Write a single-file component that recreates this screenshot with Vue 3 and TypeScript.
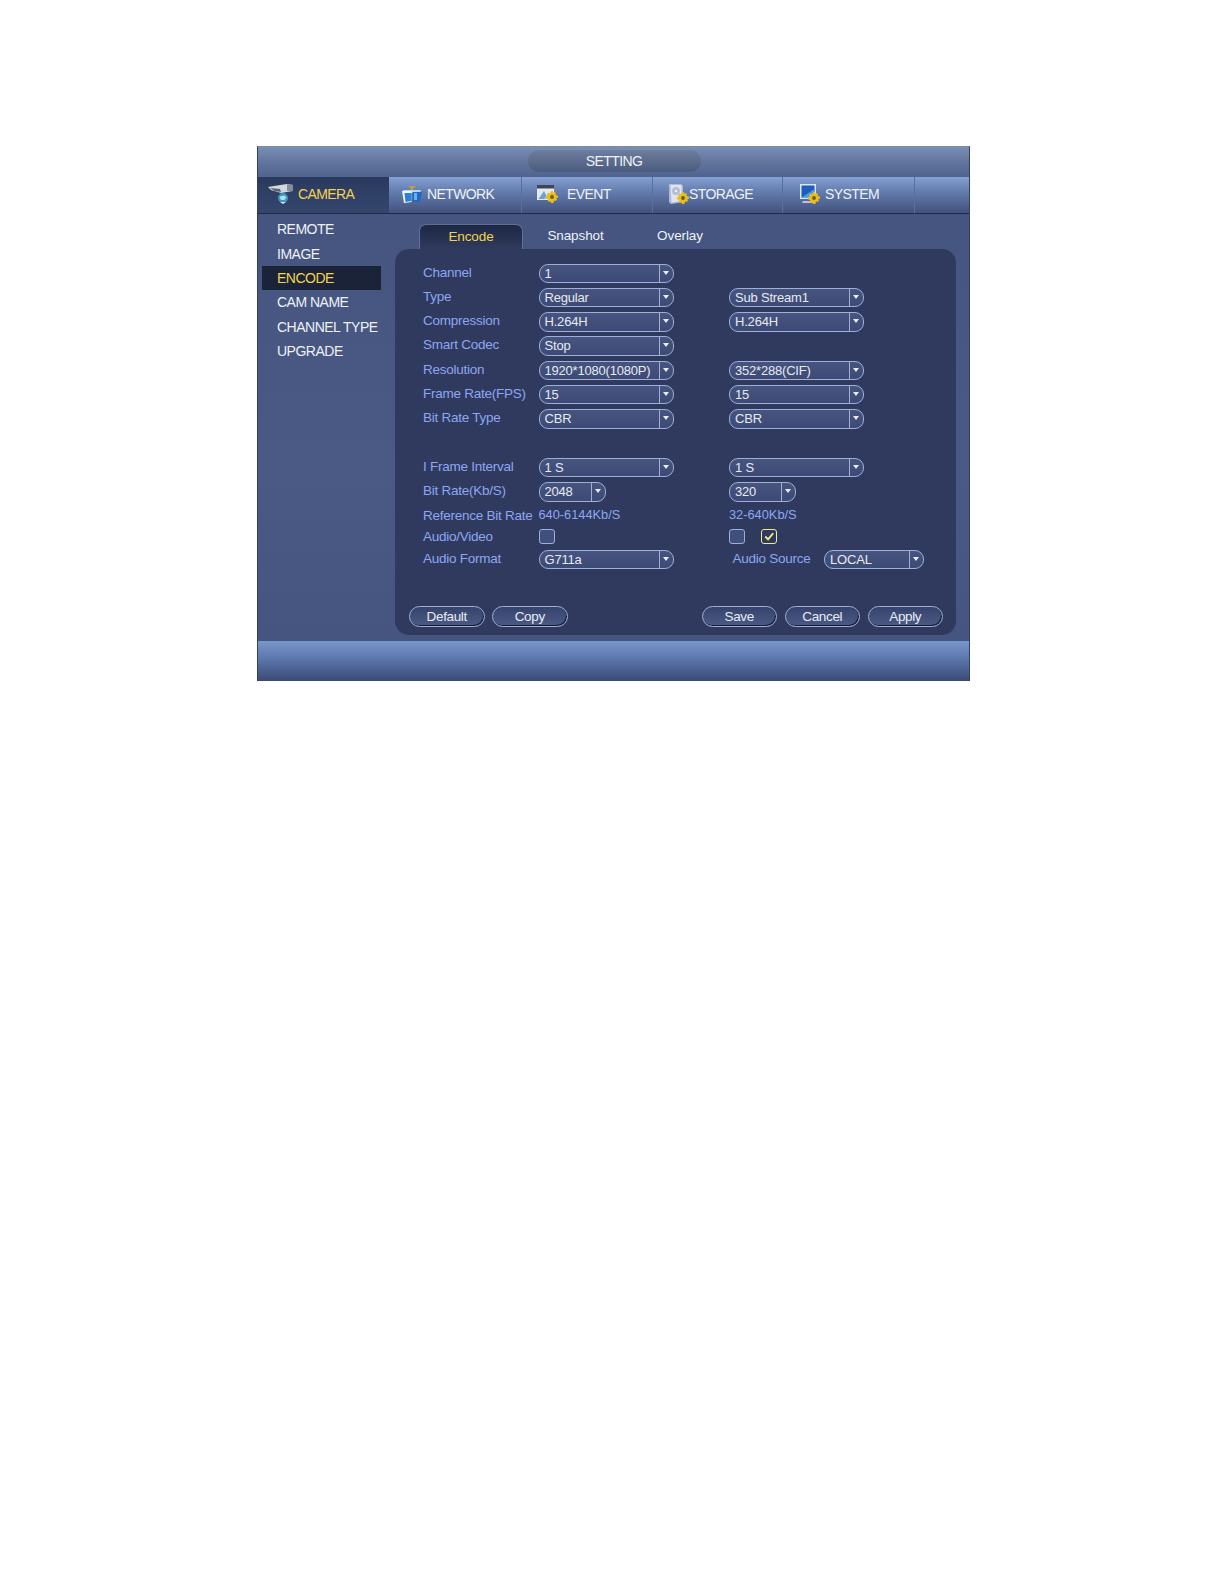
<script setup lang="ts">
interface Sel { text: string; w: number }
interface Row { label: string; a?: Sel; b?: Sel }
const wide = 135
const rows: Row[] = [
  { label: 'Channel', a: { text: '1', w: wide } },
  { label: 'Type', a: { text: 'Regular', w: wide }, b: { text: 'Sub Stream1', w: wide } },
  { label: 'Compression', a: { text: 'H.264H', w: wide }, b: { text: 'H.264H', w: wide } },
  { label: 'Smart Codec', a: { text: 'Stop', w: wide } },
  { label: 'Resolution', a: { text: '1920*1080(1080P)', w: wide }, b: { text: '352*288(CIF)', w: wide } },
  { label: 'Frame Rate(FPS)', a: { text: '15', w: wide }, b: { text: '15', w: wide } },
  { label: 'Bit Rate Type', a: { text: 'CBR', w: wide }, b: { text: 'CBR', w: wide } },
  { label: '' },
  { label: 'I Frame Interval', a: { text: '1 S', w: wide }, b: { text: '1 S', w: wide } },
  { label: 'Bit Rate(Kb/S)', a: { text: '2048', w: 67 }, b: { text: '320', w: 67 } }
]
const menu = ['REMOTE', 'IMAGE', 'ENCODE', 'CAM NAME', 'CHANNEL TYPE', 'UPGRADE']
const tabs = [
  { name: 'CAMERA', w: 131, icon: 'camera' },
  { name: 'NETWORK', w: 133, icon: 'network' },
  { name: 'EVENT', w: 131, icon: 'event' },
  { name: 'STORAGE', w: 130, icon: 'storage' },
  { name: 'SYSTEM', w: 132, icon: 'system' }
]
</script>

<template>
  <div class="page">
    <div class="win">
      <header class="title"><div class="pill">SETTING</div></header>
      <nav class="nav">
        <div v-for="(t, i) in tabs" :key="t.name" class="navitem" :class="{ on: i === 0 }" :style="{ width: t.w + 'px' }">
          <svg v-if="t.icon === 'camera'" class="ico cam" viewBox="0 0 25 20">
            <path d="M0 3 L6 2 L19 0 L25 1 L25 7 L13 9 L3 6 Z" fill="#d3d7de" />
            <path d="M2 4 L12 5 L13 8 L7 7 Z" fill="#596070" />
            <path d="M19 0 L25 1 L25 7 L19 7 Z" fill="#868d9b" />
            <circle cx="15" cy="14" r="5" fill="#3f95bd" />
            <path d="M11.5 13 Q15 10 18.5 13 L16.5 16 L13 16 Z" fill="#a6e2ea" />
            <path d="M12 18 L18 18 L15 20 Z" fill="#dde6ee" />
          </svg>
          <svg v-else-if="t.icon === 'network'" class="ico net" viewBox="0 0 20 17">
            <path d="M6 0 H14 L12 2 H11 V5 H9 V2 H8 Z" fill="#c79a3c" />
            <path d="M1 4 H19 L18 7 H2 Z" fill="#b7d6ee" />
            <path d="M0 5 H9.5 V16 L2 17 Z" fill="#eef5fb" />
            <path d="M2.5 7 H9.5 V15 L3.5 16 Z" fill="#2c80d8" />
            <path d="M10.5 6 H20 L18 16 L10.5 15 Z" fill="#1f68c4" />
            <path d="M12 7 H15 V14 H12 Z" fill="#63b2ee" />
          </svg>
          <svg v-else-if="t.icon === 'event'" class="ico evt" viewBox="0 0 21 18">
            <rect x="0" y="0" width="17" height="15" fill="#e4e9f0" />
            <rect x="0" y="0" width="17" height="3.5" fill="#3f4652" />
            <path d="M1.5 14 L7 6 L11 14 Z" fill="#6f9fd6" />
            <path d="M7 14 L11 8 L15 14 Z" fill="#a9c4e2" />
            <use href="#gear" x="9" y="6" width="12" height="12" />
          </svg>
          <svg v-else-if="t.icon === 'storage'" class="ico sto" viewBox="0 0 20 20">
            <path d="M0 0 H12 L14 2 V18 L2 20 L0 18 Z" fill="#aebbd6" />
            <path d="M1.5 1 H12.5 V17 L2.5 18.5 Z" fill="#dfe4ef" />
            <circle cx="7" cy="7" r="4" fill="#b4bed2" />
            <circle cx="7" cy="7" r="1.2" fill="#eef1f6" />
            <use href="#gear" x="8" y="8" width="12" height="12" />
          </svg>
          <svg v-else-if="t.icon === 'system'" class="ico sys" viewBox="0 0 20 20">
            <rect x="0" y="0" width="16" height="15" fill="#dbe6f0" />
            <rect x="1.5" y="1.5" width="13" height="12" fill="#1d5dc0" />
            <path d="M1.5 13.5 L14.5 5 V13.5 Z" fill="#4a9be8" />
            <path d="M3 17 H13 L14 19 H2 Z" fill="#b8c4d4" />
            <use href="#gear" x="8" y="8" width="12" height="12" />
          </svg>
          <span>{{ t.name }}</span>
        </div>
      </nav>
      <svg class="defs" width="0" height="0">
        <symbol id="gear" viewBox="0 0 14 14">
          <path d="M6 0 H8 L8.4 2 L10.2 1.2 L11.8 2.7 L11 4.5 L14 5.5 V8 L12 8.5 L12.8 10.3 L11.3 11.8 L9.5 11 L8.5 14 H5.8 L5.4 12 L3.6 12.8 L2 11.3 L2.8 9.5 L0 8.5 V5.8 L2 5.4 L1.2 3.6 L2.7 2 L4.5 2.8 Z" fill="#e8bd1c" />
          <circle cx="7" cy="7" r="2.2" fill="#6d5a10" />
        </symbol>
      </svg>

      <div class="body">
        <aside class="side">
          <div v-for="m in menu" :key="m" class="mitem" :class="{ on: m === 'ENCODE' }">{{ m }}</div>
        </aside>
        <main class="main">
          <div class="tabs">
            <div class="tab on">Encode</div>
            <div class="tab t2">Snapshot</div>
            <div class="tab t3">Overlay</div>
          </div>
          <section class="panel">
            <div class="form">
              <template v-for="r in rows" :key="r.label">
                <div class="lbl">{{ r.label }}</div>
                <div class="cell">
                  <div v-if="r.a" class="sel" :style="{ width: r.a.w + 'px' }"><span class="val">{{ r.a.text }}</span><span class="arr"></span></div>
                </div>
                <div class="cell">
                  <div v-if="r.b" class="sel" :style="{ width: r.b.w + 'px' }"><span class="val">{{ r.b.text }}</span><span class="arr"></span></div>
                </div>
              </template>
              <div class="lbl refl">Reference Bit Rate</div>
              <div class="cell"><span class="ref">640-6144Kb/S</span></div>
              <div class="cell"><span class="ref">32-640Kb/S</span></div>
              <div class="lbl av">Audio/Video</div>
              <div class="cell"><span class="chk"></span></div>
              <div class="cell checks">
                <span class="chk"></span>
                <span class="chk yes">
                  <svg viewBox="0 0 14 14"><path d="M3 7 L6 10 L11.5 3.5" fill="none" stroke="#f2ee8c" stroke-width="2" /></svg>
                </span>
              </div>
              <div class="lbl fmt">Audio Format</div>
              <div class="cell"><div class="sel" style="width: 135px"><span class="val">G711a</span><span class="arr"></span></div></div>
              <div class="cell src">
                <span class="lbl fmt srcl">Audio Source</span>
                <div class="sel" style="width: 100px"><span class="val">LOCAL</span><span class="arr"></span></div>
              </div>
            </div>
            <div class="btns">
              <button class="btn">Default</button>
              <button class="btn">Copy</button>
              <span class="sp"></span>
              <button class="btn">Save</button>
              <button class="btn">Cancel</button>
              <button class="btn">Apply</button>
            </div>
          </section>
        </main>
      </div>
      <footer class="foot"></footer>
    </div>
  </div>
</template>

<style>
html, body { background: #fff; margin: 0; }
</style>

<style scoped>
.page { height: 1584px; padding: 146px 0 0 257px; box-sizing: border-box; background: #fff; font-family: "Liberation Sans", Arial, sans-serif; }
.win { width: 713px; height: 535px; box-sizing: border-box; border: 1px solid #33405f; border-top-color: #7f8aa3; border-bottom: 0; display: flex; flex-direction: column; background: #47567f; }
.title { height: 30px; padding-bottom: 2px; box-sizing: border-box; flex: none; display: flex; justify-content: center; align-items: center; background: linear-gradient(#7a8fb6, #63779f 45%, #50638f); }
.pill { width: 173px; height: 22px; margin-left: 1px; border-radius: 11px; background: linear-gradient(#6d7e9e, #4b5b7d); color: #eef1f6; font-size: 14px; letter-spacing: -0.6px; line-height: 22px; text-align: center; }
.nav { height: 37px; flex: none; display: flex; background: linear-gradient(#85a0d2, #6781b2 35%, #42517d); border-bottom: 1px solid #1f2a48; box-sizing: border-box; }
.navitem { height: 36px; padding-bottom: 2px; box-sizing: border-box; display: flex; align-items: center; color: #eef2f8; font-size: 14px; letter-spacing: -0.6px; border-right: 1px solid #5c6f96; }
.navitem.on { background: linear-gradient(#2a3a5e, #35466f); color: #f3d34d; border-right: 0; }
.ico { flex: none; display: block; }
.cam { width: 25px; height: 20px; margin: 0 5px 0 10px; }
.net { width: 20px; height: 17px; margin: 0 5px 0 13px; }
.evt { width: 21px; height: 18px; margin: 0 9px 0 15px; }
.sto { width: 20px; height: 20px; margin: 0 0 0 16px; }
.sys { width: 20px; height: 20px; margin: 0 5px 0 17px; }
.defs { position: absolute; }
.body { flex: 1; display: flex; min-height: 0; background: linear-gradient(#45557f, #4a5a84 60%, #46557f); }
.side { width: 137px; flex: none; padding: 3.4px 0 0 4px; box-sizing: border-box; }
.mitem { width: 119px; height: 24.3px; line-height: 24px; padding-left: 15px; box-sizing: border-box; color: #eef1f6; font-size: 14px; letter-spacing: -0.5px; white-space: nowrap; }
.mitem.on { background: #1b2339; color: #f3d34d; }
.main { flex: 1; padding: 10px 13px 6px 0; display: flex; flex-direction: column; min-width: 0; }
.tabs { height: 25px; flex: none; display: flex; padding-left: 24px; }
.tab { color: #eef1f6; font-size: 13.5px; letter-spacing: -0.1px; line-height: 24px; text-align: center; }
.tab.on { width: 104px; color: #f3d34d; background: linear-gradient(#1d2844, #2f3a5e); border: 1px solid #5f6f98; border-bottom: 0; border-radius: 7px 7px 0 0; box-sizing: border-box; }
.t2 { width: 105px; }
.t3 { width: 104px; }
.panel { flex: 1; background: #2f3a5e; border-radius: 14px; display: flex; flex-direction: column; padding: 14.5px 13px 8px 14px; min-height: 0; }
.form { display: grid; grid-template-columns: 129.5px 190.5px 1fr; grid-template-rows: repeat(10, 24.3px) 23px 20.5px 20px; }
.lbl { padding-left: 14px; color: #8ea6f2; font-size: 13.5px; letter-spacing: -0.25px; line-height: 17px; white-space: nowrap; }
.lbl.refl { line-height: 19px; }
.lbl.av { line-height: 15px; }
.lbl.fmt { line-height: 18px; }
.cell { display: flex; align-items: flex-start; }
.sel { height: 19.5px; box-sizing: border-box; border: 1px solid #9eb0d8; border-radius: 9px; background: linear-gradient(#46547f, #3d4a75); display: flex; color: #e6eaf3; font-size: 13px; line-height: 17.5px; letter-spacing: -0.2px; }
.val { flex: 1; padding-left: 5px; white-space: nowrap; overflow: hidden; }
.arr { width: 13px; flex: none; border-left: 1px solid #9eb0d8; position: relative; }
.arr::after { content: ""; position: absolute; left: 3px; top: 6px; border: 3.5px solid transparent; border-top: 4px solid #e8ecf4; border-bottom: 0; }
.ref { color: #8ea6f2; font-size: 12.8px; line-height: 18px; letter-spacing: 0; }
.chk { width: 16px; height: 15px; box-sizing: border-box; border: 1px solid #9eb0d8; border-radius: 3px; background: #414f7c; display: block; }
.chk.yes { border-color: #f0ec96; background: #2f3a5e; margin-left: 16px; }
.chk svg { display: block; width: 14px; height: 13px; }
.src { padding-left: 3.5px; }
.srcl { padding-left: 0; margin-right: 13.5px; }
.btns { margin-top: auto; display: flex; gap: 7.5px; }
.sp { flex: 1; margin-right: -7.5px; }
.btn { width: 75.5px; height: 21px; padding: 0; box-sizing: border-box; border: 1px solid #9eb0d8; border-radius: 10.5px; box-shadow: inset -1px -1px 0 #141c36; background: linear-gradient(#36436c, #4b5a86); color: #e8ecf4; font: 13.5px/18px "Liberation Sans", Arial, sans-serif; letter-spacing: -0.35px; }
.foot { height: 40px; flex: none; background: linear-gradient(#7996cb, #5f7ab0 40%, #3b4a76); }
</style>
